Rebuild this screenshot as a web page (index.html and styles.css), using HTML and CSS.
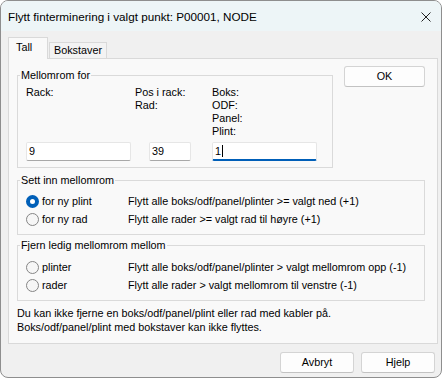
FILE: index.html
```html
<!DOCTYPE html>
<html lang="no">
<head>
<meta charset="utf-8">
<title>Flytt finterminering</title>
<link rel="stylesheet" href="styles.css">
</head>
<body>
<div class="window">
  <div class="titlebar">
    <span class="title">Flytt finterminering i valgt punkt: P00001, NODE</span>
    <svg class="close" viewBox="0 0 10 10" width="10" height="10"><path d="M0.5 0.5L9.5 9.5M9.5 0.5L0.5 9.5" stroke="#222" stroke-width="1" fill="none"/></svg>
  </div>
  <div class="main">
    <div class="tabs">
      <div class="tab active">Tall</div>
      <div class="tab">Bokstaver</div>
    </div>
    <div class="panel">
      <div class="top-row">
        <fieldset class="group g1">
          <legend>Mellomrom for</legend>
          <div class="grid">
            <div class="lbl">Rack:</div>
            <div class="lbl">Pos i rack:<br>Rad:</div>
            <div class="lbl">Boks:<br>ODF:<br>Panel:<br>Plint:</div>
            <div class="input w1">9</div>
            <div class="input w2">39</div>
            <div class="input w3 focus">1<span class="caret"></span></div>
          </div>
        </fieldset>
        <div class="btn ok">OK</div>
      </div>
      <fieldset class="group g2">
        <legend>Sett inn mellomrom</legend>
        <div class="rows">
          <div class="opt"><span class="radio checked"></span>for ny plint</div>
          <div class="desc">Flytt alle boks/odf/panel/plinter &gt;= valgt ned (+1)</div>
          <div class="opt"><span class="radio"></span>for ny rad</div>
          <div class="desc">Flytt alle rader &gt;= valgt rad til høyre (+1)</div>
        </div>
      </fieldset>
      <fieldset class="group g3">
        <legend>Fjern ledig mellomrom mellom</legend>
        <div class="rows">
          <div class="opt"><span class="radio"></span>plinter</div>
          <div class="desc">Flytt alle boks/odf/panel/plinter &gt; valgt mellomrom opp (-1)</div>
          <div class="opt"><span class="radio"></span>rader</div>
          <div class="desc">Flytt alle rader &gt; valgt mellomrom til venstre (-1)</div>
        </div>
      </fieldset>
      <p class="note">Du kan ikke fjerne en boks/odf/panel/plint eller rad med kabler på.<br>Boks/odf/panel/plint med bokstaver kan ikke flyttes.</p>
    </div>
    <div class="footer">
      <div class="btn">Avbryt</div>
      <div class="btn">Hjelp</div>
    </div>
  </div>
</div>
</body>
</html>
```

FILE: styles.css
```css
* { box-sizing: border-box; }
html, body { margin: 0; padding: 0; background: #ffffff; }
body {
  font-family: "Liberation Sans", Arial, sans-serif;
  font-size: 10.8px;
  line-height: 13px;
  color: #000;
}
.window {
  width: 442px;
  height: 378px;
  border: 1px solid #8e8e8e;
  border-radius: 8px;
  overflow: hidden;
  background: #f0f0f0;
  display: flex;
  flex-direction: column;
}
.titlebar {
  height: 30px;
  flex: none;
  background: #edf5f7;
  display: flex;
  align-items: center;
  padding: 1px 10px 0 7px;
}
.title { flex: 1; font-size: 11.7px; }
.close { display: block; }
.main {
  flex: 1;
  display: flex;
  flex-direction: column;
  padding: 6px 3px 0 7px;
}
.tabs {
  display: flex;
  align-items: flex-end;
  height: 21px;
  flex: none;
}
.tab {
  border: 1px solid #d9d9d9;
  border-bottom: none;
  background: #f3f3f3;
  height: 16px;
  padding: 1px 4px 0 4px;
  margin-left: 1px;
  width: 58px;
}
.tab.active {
  position: relative;
  z-index: 1;
  margin-left: 0;
  margin-bottom: -1px;
  height: 22px;
  width: 40px;
  background: #f9f9f9;
  padding: 3px 7px 0 7px;
}
.panel {
  height: 286px;
  flex: none;
  border: 1px solid #d9d9d9;
  background: #f9f9f9;
  padding: 0 12px 0 8px;
}
.top-row {
  display: flex;
  align-items: flex-start;
  gap: 11px;
}
.group {
  margin: 0;
  padding: 0;
  border: 1px solid #dadada;
  min-inline-size: 0;
}
.group legend {
  margin-left: 2px;
  padding: 0 1px;
  line-height: 13px;
}
.g1 { width: 316px; margin-top: 10px; }
.g2 { margin-top: 6px; }
.g3 { margin-top: 4px; }
.grid {
  display: grid;
  grid-template-columns: 109px 77px 1fr;
  row-gap: 4px;
  padding: 4px 0 6px 8px;
}
.lbl { align-self: start; }
.input {
  height: 19px;
  background: #fff;
  border: 1px solid #e6e6e6;
  border-bottom-color: #a8a8a8;
  border-radius: 2px;
  padding: 2px 0 0 2px;
  display: flex;
  align-items: flex-start;
}
.w1 { width: 105px; }
.w2 { width: 42px; margin-left: 14px; }
.w3 { width: 105px; }
.input.focus { border-bottom: 2px solid #005fb8; }
.caret {
  display: inline-block;
  width: 1px;
  height: 12px;
  margin-left: 1px;
  background: #000;
}
.btn {
  width: 74px;
  height: 21px;
  background: #fdfdfd;
  border: 1px solid #d4d4d4;
  border-bottom-color: #c2c2c2;
  border-radius: 3px;
  display: flex;
  align-items: center;
  justify-content: center;
}
.btn.ok { width: 81px; margin-top: 7px; }
.rows {
  display: grid;
  grid-template-columns: 102px 1fr;
  grid-auto-rows: 18px;
  align-items: center;
  padding: 5px 0 6px 8px;
}
.g3 .rows { padding-top: 6px; }
.opt { display: flex; align-items: center; gap: 3px; }
.radio {
  width: 13px;
  height: 13px;
  border-radius: 50%;
  border: 1px solid #858585;
  background: #f6f6f6;
  flex: none;
}
.radio.checked {
  border: 4px solid #005fb8;
  background: #fff;
}
.note {
  margin: 5px 0 0 0;
  line-height: 14px;
}
.footer {
  display: flex;
  justify-content: flex-end;
  gap: 7px;
  padding: 8px 3px 0 0;
}
```
